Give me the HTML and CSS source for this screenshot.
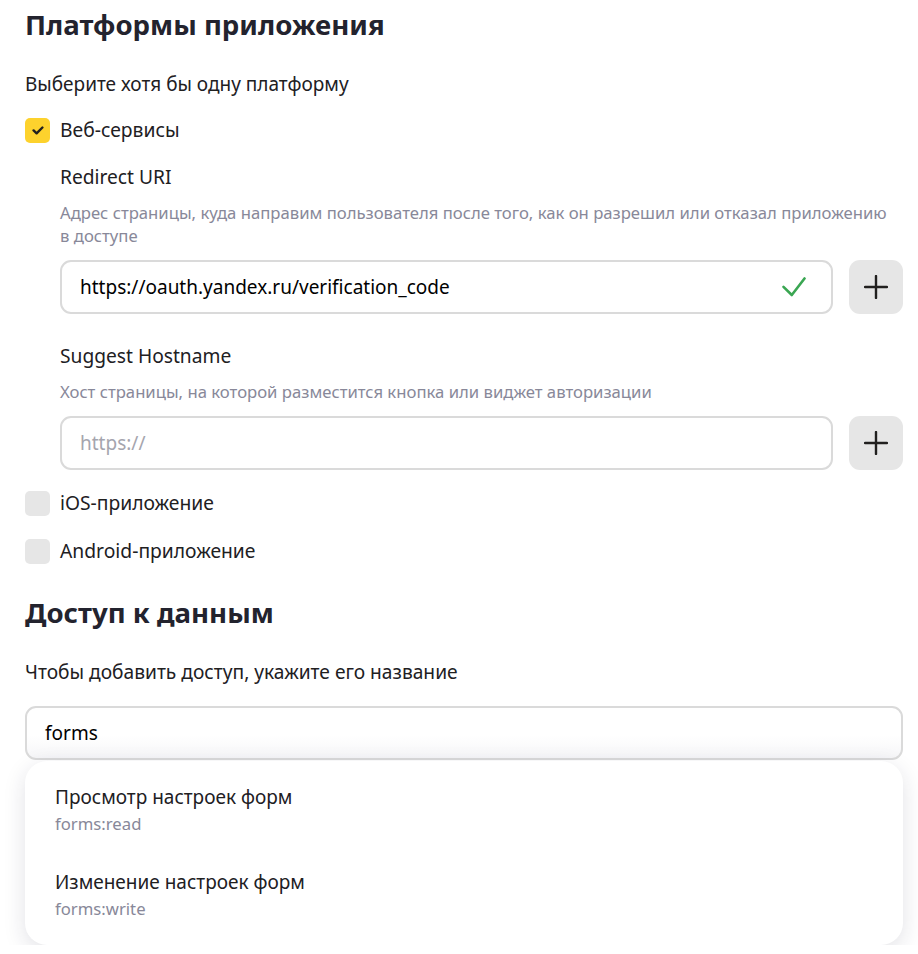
FILE: index.html
```html
<!DOCTYPE html>
<html lang="ru">
<head>
<meta charset="utf-8">
<title>Платформы приложения</title>
<link rel="stylesheet" href="styles.css">
</head>
<body>
<main class="page">
  <h2 class="section-title">Платформы приложения</h2>
  <p class="lead">Выберите хотя бы одну платформу</p>

  <label class="check-row check-row--first">
    <span class="checkbox checkbox--on">
      <svg width="12" height="9" viewBox="0 0 12 9"><path d="M1.6 4.4 4.6 7.3 10.4 1.5" fill="none" stroke="#21201f" stroke-width="2.4" stroke-linecap="round" stroke-linejoin="round"/></svg>
    </span>
    <span class="check-label">Веб-сервисы</span>
  </label>

  <div class="platform-body">
    <div class="field-title">Redirect URI</div>
    <div class="field-desc">Адрес страницы, куда направим пользователя после того, как он разрешил или отказал приложению в доступе</div>
    <div class="field-row">
      <div class="field">
        <span class="field-value">https://oauth.yandex.ru/verification_code</span>
        <svg class="valid-icon" width="24" height="20" viewBox="0 0 24 20"><path d="M1.5 9.8 9.8 18 22.5 1.5" fill="none" stroke="#3aa652" stroke-width="2.6" stroke-linecap="round" stroke-linejoin="round"/></svg>
      </div>
      <button class="add-btn" type="button" aria-label="Добавить">
        <svg width="24" height="24" viewBox="0 0 24 24"><path d="M12 1v22M1 12h22" stroke="#21201f" stroke-width="2.4" stroke-linecap="round"/></svg>
      </button>
    </div>

    <div class="field-title field-title--next">Suggest Hostname</div>
    <div class="field-desc">Хост страницы, на которой разместится кнопка или виджет авторизации</div>
    <div class="field-row">
      <div class="field">
        <span class="field-placeholder">https://</span>
      </div>
      <button class="add-btn" type="button" aria-label="Добавить">
        <svg width="24" height="24" viewBox="0 0 24 24"><path d="M12 1v22M1 12h22" stroke="#21201f" stroke-width="2.4" stroke-linecap="round"/></svg>
      </button>
    </div>
  </div>

  <label class="check-row check-row--ios">
    <span class="checkbox"></span>
    <span class="check-label">iOS-приложение</span>
  </label>
  <label class="check-row check-row--android">
    <span class="checkbox"></span>
    <span class="check-label">Android-приложение</span>
  </label>

  <h2 class="section-title section-title--next">Доступ к данным</h2>
  <p class="lead lead--access">Чтобы добавить доступ, укажите его название</p>

  <div class="search">
    <div class="field field--search">
      <span class="field-value">forms</span>
    </div>
    <div class="suggest">
      <div class="suggest-item">
        <div class="suggest-title">Просмотр настроек форм</div>
        <div class="suggest-code">forms:read</div>
      </div>
      <div class="suggest-item">
        <div class="suggest-title">Изменение настроек форм</div>
        <div class="suggest-code">forms:write</div>
      </div>
    </div>
  </div>
</main>
</body>
</html>
```
FILE: styles.css
```css
* { box-sizing: border-box; }

html, body {
  margin: 0;
  background: #ffffff;
}

body {
  font-family: "Noto Sans", "Open Sans", sans-serif;
  color: #21201f;
}

.page {
  width: 918px;
  padding: 7px 15px 0 25px;
}

.section-title {
  margin: 0;
  font-size: 27.6px;
  line-height: 34px;
  font-weight: 700;
  color: #23232e;
}

.section-title--next {
  margin-top: 31px;
}

.lead {
  margin: 31.3px 0 0;
  font-size: 19px;
  line-height: 24px;
}

.lead--access {
  margin-top: 30.3px;
  font-size: 19.2px;
}

.check-row {
  display: flex;
  align-items: center;
  gap: 10px;
  height: 25px;
}

.check-row--first { margin-top: 21.7px; }
.check-row--ios { margin-top: 21.5px; }
.check-row--android { margin-top: 23px; }

.checkbox {
  width: 25px;
  height: 25px;
  border-radius: 5px;
  background: #e6e6e6;
  display: flex;
  align-items: center;
  justify-content: center;
  flex: none;
}

.checkbox--on {
  background: #fdd22d;
}

.check-label {
  font-size: 19.3px;
  line-height: 24px;
  margin-top: -1px;
}

.platform-body {
  padding-left: 35px;
}

.field-title {
  margin-top: 21.6px;
  font-size: 19.2px;
  line-height: 24px;
}

.field-title--next {
  margin-top: 29.6px;
}

.field-desc {
  margin-top: 12.9px;
  font-size: 16.7px;
  line-height: 23px;
  color: #888899;
  padding-right: 10px;
}

.field-row {
  display: flex;
  gap: 16px;
  margin-top: 12.5px;
}

.field {
  flex: 1;
  height: 54px;
  border: 2px solid #dadada;
  border-radius: 11px;
  background: #fff;
  display: flex;
  align-items: center;
  padding: 0 24px 0 18px;
  font-size: 19px;
  line-height: 24px;
}

.field-value {
  flex: 1;
  color: #000;
}

.field-placeholder {
  flex: 1;
  color: #a5a5ae;
}

.valid-icon {
  flex: none;
  margin-right: 1px;
}

.add-btn {
  width: 54px;
  height: 54px;
  flex: none;
  border: 0;
  border-radius: 11px;
  background: #e6e6e6;
  display: flex;
  align-items: center;
  justify-content: center;
  padding: 0;
}

.search {
  margin-top: 22.5px;
}

.field--search {
  height: 54px;
  background: linear-gradient(#fff 55%, #f6f6f8);
}

.suggest {
  margin-top: 1px;
  padding: 6px 0 7.5px;
  background: #fff;
  border-radius: 22px;
  box-shadow: 0 6px 22px rgba(30, 30, 60, 0.13);
}

.suggest-item {
  padding: 18px 30px;
}

.suggest-title {
  font-size: 19px;
  line-height: 24px;
}

.suggest-code {
  margin-top: 5px;
  font-size: 16.7px;
  line-height: 20px;
  color: #888899;
}
```
